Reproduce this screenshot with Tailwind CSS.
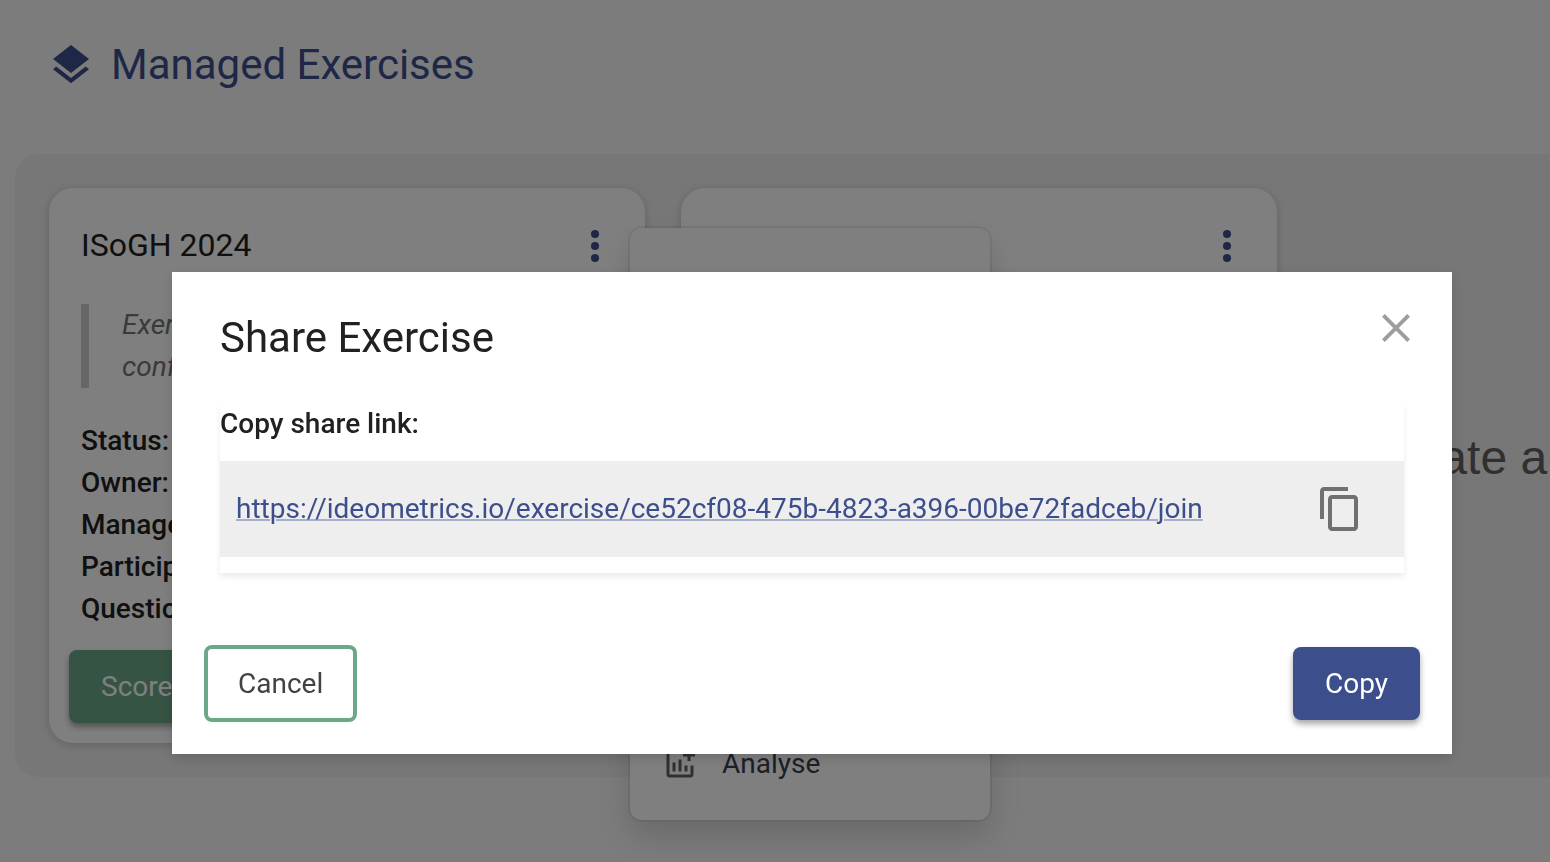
<!DOCTYPE html>
<html lang="en">
<head>
  <meta charset="UTF-8">
  <meta name="viewport" content="width=device-width, initial-scale=1.0">
  <title>Managed Exercises</title>
  <script src="https://cdn.jsdelivr.net/npm/@tailwindcss/browser@4"></script>
</head>
<body class="relative min-h-screen overflow-hidden bg-[#f8f8f8] font-[Roboto,sans-serif] text-[28px] leading-[42px] text-[#212121]">

  <!-- Header -->
  <header class="flex items-center gap-4 px-[47px] pt-8 text-[#3d4e8d]">
    <svg viewBox="0 0 24 24" fill="currentColor" class="size-12 shrink-0">
      <path d="M11.99 18.54l-7.37-5.73L3 14.07l9 7 9-7-1.63-1.27-7.38 5.74zM12 16l7.36-5.73L21 9l-9-7-9 7 1.63 1.27L12 16z" />
    </svg>
    <h1 class="text-[42px] leading-[66px]">Managed Exercises</h1>
  </header>

  <!-- Exercise list -->
  <main class="mt-14 ml-[15px] flex gap-9 overflow-hidden rounded-l-3xl bg-[#eeeeee] py-[34px] pl-[34px]">
    <article class="flex w-[596px] shrink-0 flex-col rounded-3xl bg-white p-5 shadow-[0_2px_8px_rgba(0,0,0,0.18)]">
      <div class="flex items-start justify-between pt-[14px] pr-[6px] pl-3">
        <h2 class="text-[32px] leading-[46px]">ISoGH 2024</h2>
        <button aria-label="Exercise options" class="text-[#3d4e8d]">
          <svg viewBox="0 0 24 24" fill="currentColor" class="size-12">
            <circle cx="12" cy="6" r="2" /><circle cx="12" cy="12" r="2" /><circle cx="12" cy="18" r="2" />
          </svg>
        </button>
      </div>
      <blockquote class="mt-[34px] ml-3 border-l-8 border-[#cccccc] pl-[33px] text-[#757575] italic">Exercise<br>conference</blockquote>
      <ul class="mt-8 pl-3 font-medium">
        <li>Status:</li>
        <li>Owner:</li>
        <li>Managers:</li>
        <li>Participants:</li>
        <li>Questions:</li>
      </ul>
      <button class="mt-5 self-start rounded-lg bg-[#6ba888] px-8 py-4 leading-[41px] text-white shadow-[0_4px_6px_rgba(0,0,0,0.35)]">Score</button>
    </article>

    <article class="w-[596px] shrink-0 rounded-3xl bg-white p-5 shadow-[0_2px_8px_rgba(0,0,0,0.18)]">
      <div class="flex justify-end pt-[14px] pr-[6px]">
        <button aria-label="Exercise options" class="text-[#3d4e8d]">
          <svg viewBox="0 0 24 24" fill="currentColor" class="size-12">
            <circle cx="12" cy="6" r="2" /><circle cx="12" cy="12" r="2" /><circle cx="12" cy="18" r="2" />
          </svg>
        </button>
      </div>
    </article>

    <button class="shrink-0 px-[50px] pb-4 font-['Liberation_Sans',Arial,sans-serif] text-5xl whitespace-nowrap text-[#616161]">Create a</button>
  </main>

  <!-- Card menu -->
  <div class="absolute top-[228px] left-[630px] flex h-[592px] w-[360px] flex-col justify-end rounded-xl bg-white px-8 pb-[35px] shadow-[0_0_0_2px_rgba(0,0,0,0.06),0_16px_32px_rgba(0,0,0,0.15)]">
    <a href="#" class="flex items-center gap-6 text-[#374151]">
      <svg viewBox="0 0 24 24" fill="currentColor" class="size-9 text-[#616161]">
        <path d="M22 5v2h-3v3h-2V7h-3V5h3V2h2v3h3zm-3 14H5V5h6V3H5c-1.1 0-2 .9-2 2v14c0 1.1.9 2 2 2h14c1.1 0 2-.9 2-2v-6h-2v6zm-4-6v4h2v-4h-2zm-4 4h2V9h-2v8zm-2 0v-6H7v6h2z" />
      </svg>
      Analyse
    </a>
  </div>

  <!-- Share dialog -->
  <div class="fixed inset-0 flex items-start bg-black/50 pt-[272px] pr-[98px] pl-[172px]">
    <section role="dialog" aria-labelledby="shareTitle" class="min-w-0 flex-1 bg-white shadow-[0_4px_12px_rgba(0,0,0,0.15)]">
      <div class="flex items-start justify-between pt-8 pr-8 pl-12">
        <h2 id="shareTitle" class="text-[42px] leading-[67px]">Share Exercise</h2>
        <button aria-label="Close" class="text-[#9e9e9e]">
          <svg viewBox="0 0 24 24" fill="currentColor" class="size-12">
            <path d="M19 6.41L17.59 5 12 10.59 6.41 5 5 6.41 10.59 12 5 17.59 6.41 19 12 13.41 17.59 19 19 17.59 13.41 12z" />
          </svg>
        </button>
      </div>

      <div class="mx-12 mt-8 pb-4 shadow-[0_4px_6px_rgba(0,0,0,0.08)]">
        <p class="font-medium">Copy share link:</p>
        <div class="mt-4 flex h-24 items-center justify-between bg-[#eeeeee] pr-10 pl-4">
          <a href="#" id="shareLink" class="text-[#3d4e8d] underline decoration-[#3d4e8d]/40 decoration-2">https://ideometrics.io/exercise/ce52cf08-475b-4823-a396-00be72fadceb/join</a>
          <button aria-label="Copy link" class="copy-link text-[#707070]">
            <svg viewBox="0 0 24 24" fill="currentColor" class="size-12">
              <path d="M16 1H4c-1.1 0-2 .9-2 2v14h2V3h12V1zm3 4H8c-1.1 0-2 .9-2 2v14c0 1.1.9 2 2 2h11c1.1 0 2-.9 2-2V7c0-1.1-.9-2-2-2zm0 16H8V7h11v14z" />
            </svg>
          </button>
        </div>
      </div>

      <div class="mt-[72px] flex items-center justify-between px-8 pb-8">
        <button class="rounded-lg border-4 border-[#6ba888] px-[30px] py-[14px] leading-[41px] text-[#424242]">Cancel</button>
        <button class="copy-link rounded-lg bg-[#3d4e8d] px-8 py-4 leading-[41px] text-white shadow-[0_4px_6px_rgba(0,0,0,0.35)]">Copy</button>
      </div>
    </section>
  </div>

  <script>
    // Copy the share link to the clipboard
    const shareLink = document.getElementById("shareLink");

    document.querySelectorAll(".copy-link").forEach((button) => {
      button.addEventListener("click", () => {
        navigator.clipboard.writeText(shareLink.textContent);
      });
    });
  </script>

</body>
</html>
